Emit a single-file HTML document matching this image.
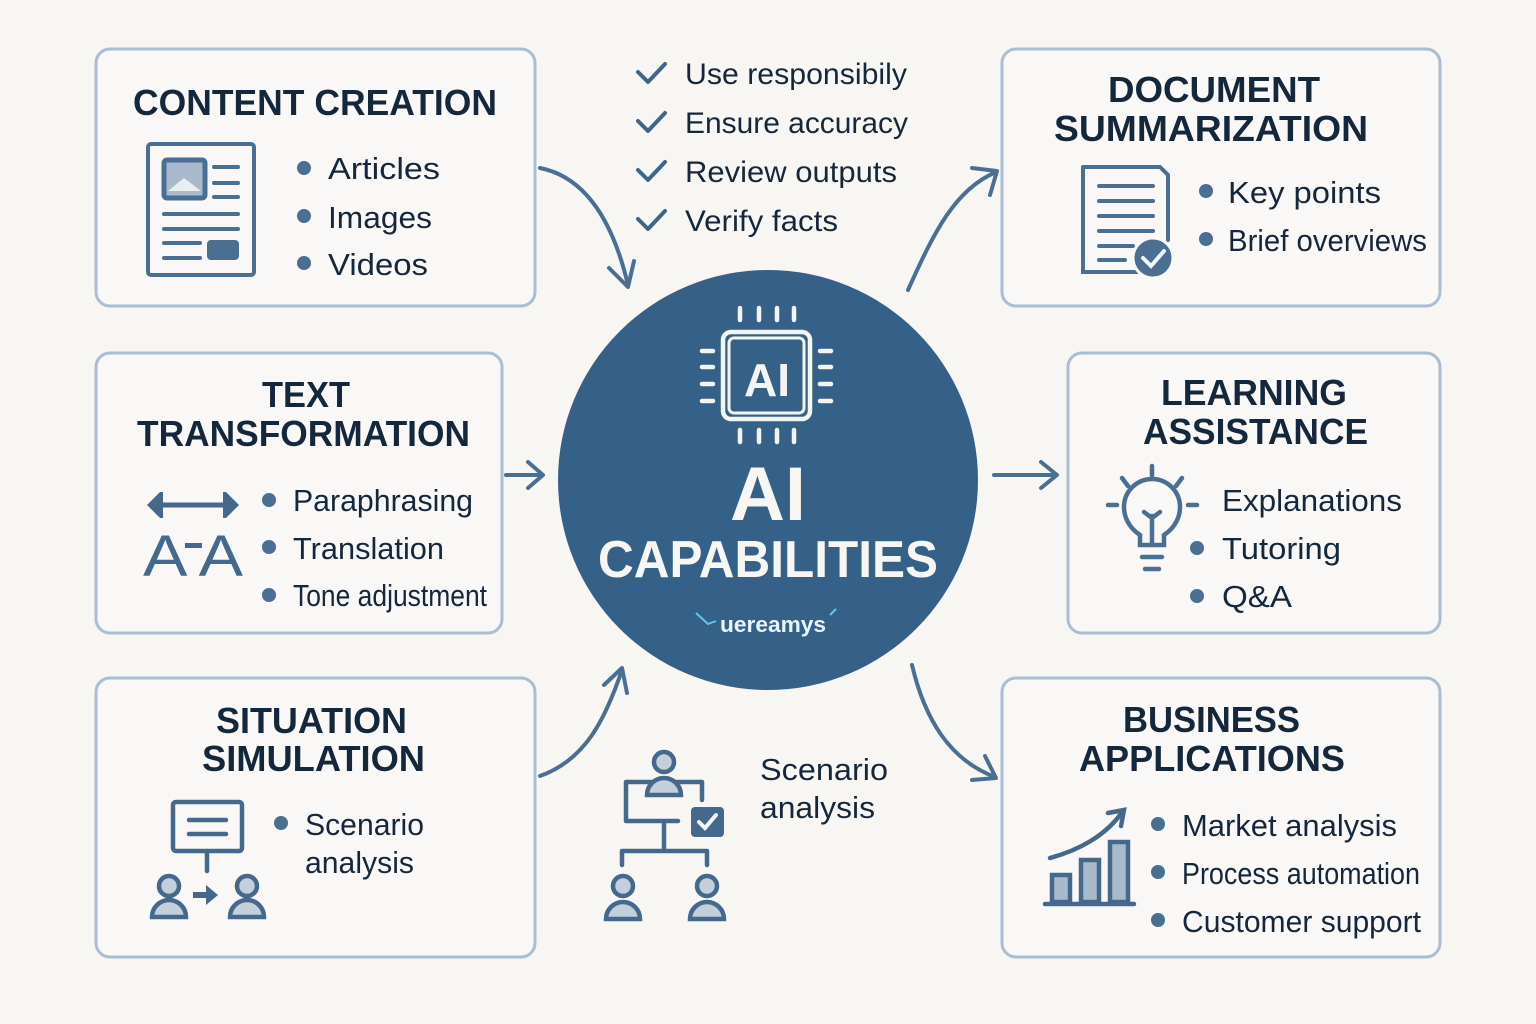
<!DOCTYPE html>
<html><head><meta charset="utf-8"><style>
html,body{margin:0;padding:0;background:#f8f6f3;}
svg{display:block}
.t{font-family:"Liberation Sans",sans-serif;font-weight:bold;fill:#15283b;}
.b{font-family:"Liberation Sans",sans-serif;fill:#15283b;}
</style></head><body>
<svg width="1536" height="1024" viewBox="0 0 1536 1024" xmlns="http://www.w3.org/2000/svg">
<rect width="1536" height="1024" fill="#f8f6f3"/>
<g fill="#f9f8f6" stroke="#a9bed3" stroke-width="3">
<rect x="96" y="49" width="439" height="257" rx="14"/>
<rect x="1002" y="49" width="438" height="257" rx="14"/>
<rect x="96" y="353" width="406" height="280" rx="14"/>
<rect x="1068" y="353" width="372" height="280" rx="14"/>
<rect x="96" y="678" width="439" height="279" rx="14"/>
<rect x="1002" y="678" width="438" height="279" rx="14"/>
</g>

<!-- arrows -->
<g fill="none" stroke="#4a6f92" stroke-width="4" stroke-linecap="round" stroke-linejoin="round">
<path d="M540 168 C590 178 615 230 628 285"/><path d="M609 268 L628 287 L634 261"/>
<path d="M908 290 C935 230 955 190 996 172"/><path d="M972 168 L997 171 L990 195"/>
<path d="M506 475 L542 475"/><path d="M528 462 L543 475 L528 488"/>
<path d="M994 475 L1056 475"/><path d="M1041 462 L1057 475 L1041 488"/>
<path d="M540 776 C585 760 605 720 622 670"/><path d="M604 685 L622 668 L627 693"/>
<path d="M912 665 C925 720 950 760 995 777"/><path d="M972 780 L996 778 L985 756"/>
</g>

<!-- center circle -->
<circle cx="768" cy="480" r="210" fill="#356189"/>
<g fill="none" stroke="#f4f4f2" stroke-width="4.5" stroke-linecap="round">
<rect x="723" y="332" width="87" height="87" rx="8"/>
<rect x="729" y="338" width="75" height="75" rx="5" stroke-width="3"/>
<path d="M740 308v12M759 308v12M777 308v12M794 308v12M740 430v12M759 430v12M777 430v12M794 430v12"/>
<path d="M702 351h11M702 367h11M702 384h11M702 401h11M820 351h11M820 367h11M820 384h11M820 401h11"/>
</g>
<text x="767" y="396" text-anchor="middle" font-family="Liberation Sans,sans-serif" font-weight="bold" font-size="46" fill="#f4f4f2">AI</text>
<text x="768" y="520" text-anchor="middle" class="t" style="fill:#f7f6f3" font-size="76">AI</text>
<text x="768" y="577" text-anchor="middle" class="t" style="fill:#f7f6f3" font-size="52" textLength="340" lengthAdjust="spacingAndGlyphs">CAPABILITIES</text>
<text x="720" y="632" class="t" style="fill:#e8f4fb" font-size="22" textLength="106" lengthAdjust="spacingAndGlyphs">uereamys</text>
<path d="M696 613 L708 624 L716 621" stroke="#62c6ea" stroke-width="2" fill="none"/>
<path d="M830 615 L836 609" stroke="#62c6ea" stroke-width="2"/>

<!-- checklist -->
<g fill="none" stroke="#3f6688" stroke-width="4" stroke-linecap="round" stroke-linejoin="round">
<path d="M638 72 L648 82 L665 64"/><path d="M638 121 L648 131 L665 113"/><path d="M638 170 L648 180 L665 162"/><path d="M638 219 L648 229 L665 211"/>
</g>
<g class="b" font-size="30">
<text x="685" y="84" class="b" textLength="222" lengthAdjust="spacingAndGlyphs">Use responsibily</text>
<text x="685" y="133" class="b" textLength="223" lengthAdjust="spacingAndGlyphs">Ensure accuracy</text>
<text x="685" y="182" class="b" textLength="212" lengthAdjust="spacingAndGlyphs">Review outputs</text>
<text x="685" y="231" class="b" textLength="153" lengthAdjust="spacingAndGlyphs">Verify facts</text>
</g>

<!-- titles -->
<g font-size="36">
<text class="t" x="133" y="115" textLength="364" lengthAdjust="spacingAndGlyphs">CONTENT CREATION</text>
<text class="t" x="1108" y="102" textLength="212" lengthAdjust="spacingAndGlyphs">DOCUMENT</text>
<text class="t" x="1054" y="141" textLength="314" lengthAdjust="spacingAndGlyphs">SUMMARIZATION</text>
<text class="t" x="262" y="407" textLength="88" lengthAdjust="spacingAndGlyphs">TEXT</text>
<text class="t" x="137" y="446" textLength="333" lengthAdjust="spacingAndGlyphs">TRANSFORMATION</text>
<text class="t" x="1161" y="405" textLength="186" lengthAdjust="spacingAndGlyphs">LEARNING</text>
<text class="t" x="1143" y="444" textLength="225" lengthAdjust="spacingAndGlyphs">ASSISTANCE</text>
<text class="t" x="216" y="733" textLength="191" lengthAdjust="spacingAndGlyphs">SITUATION</text>
<text class="t" x="202" y="771" textLength="223" lengthAdjust="spacingAndGlyphs">SIMULATION</text>
<text class="t" x="1123" y="732" textLength="177" lengthAdjust="spacingAndGlyphs">BUSINESS</text>
<text class="t" x="1079" y="771" textLength="266" lengthAdjust="spacingAndGlyphs">APPLICATIONS</text>
</g>

<!-- bullets -->
<g fill="#4a6f92">
<circle cx="304" cy="168" r="7"/><circle cx="304" cy="216" r="7"/><circle cx="304" cy="263" r="7"/>
<circle cx="1206" cy="191" r="7"/><circle cx="1206" cy="239" r="7"/>
<circle cx="269" cy="500" r="7"/><circle cx="269" cy="547" r="7"/><circle cx="269" cy="595" r="7"/>
<circle cx="1197" cy="548" r="7"/><circle cx="1197" cy="596" r="7"/>
<circle cx="281" cy="823" r="7"/>
<circle cx="1158" cy="824" r="7"/><circle cx="1158" cy="872" r="7"/><circle cx="1158" cy="920" r="7"/>
</g>
<g font-size="31">
<text class="b" x="328" y="179" textLength="112" lengthAdjust="spacingAndGlyphs">Articles</text>
<text class="b" x="328" y="228" textLength="104" lengthAdjust="spacingAndGlyphs">Images</text>
<text class="b" x="328" y="275" textLength="100" lengthAdjust="spacingAndGlyphs">Videos</text>
<text class="b" x="1228" y="203" textLength="153" lengthAdjust="spacingAndGlyphs">Key points</text>
<text class="b" x="1228" y="251" textLength="199" lengthAdjust="spacingAndGlyphs">Brief overviews</text>
<text class="b" x="293" y="511" textLength="180" lengthAdjust="spacingAndGlyphs">Paraphrasing</text>
<text class="b" x="293" y="559" textLength="151" lengthAdjust="spacingAndGlyphs">Translation</text>
<text class="b" x="293" y="606" textLength="194" lengthAdjust="spacingAndGlyphs">Tone adjustment</text>
<text class="b" x="1222" y="511" textLength="180" lengthAdjust="spacingAndGlyphs">Explanations</text>
<text class="b" x="1222" y="559" textLength="119" lengthAdjust="spacingAndGlyphs">Tutoring</text>
<text class="b" x="1222" y="607" textLength="70" lengthAdjust="spacingAndGlyphs">Q&amp;A</text>
<text class="b" x="305" y="835" textLength="119" lengthAdjust="spacingAndGlyphs">Scenario</text>
<text class="b" x="305" y="873" textLength="109" lengthAdjust="spacingAndGlyphs">analysis</text>
<text class="b" x="760" y="780" textLength="128" lengthAdjust="spacingAndGlyphs">Scenario</text>
<text class="b" x="760" y="818" textLength="115" lengthAdjust="spacingAndGlyphs">analysis</text>
<text class="b" x="1182" y="836" textLength="215" lengthAdjust="spacingAndGlyphs">Market analysis</text>
<text class="b" x="1182" y="884" textLength="238" lengthAdjust="spacingAndGlyphs">Process automation</text>
<text class="b" x="1182" y="932" textLength="239" lengthAdjust="spacingAndGlyphs">Customer support</text>
</g>

<!-- content icon -->
<g stroke="#4a6f92" stroke-linecap="round" fill="none">
<rect x="148" y="144" width="106" height="131" rx="3" stroke-width="4"/>
<rect x="164" y="160" width="41" height="38" rx="3" stroke-width="5" fill="#a8bacb"/>
<path d="M168 191 L184 178 L201 191" stroke-width="0" fill="#e9eef2"/>
<path d="M214 167h24M214 183h24M214 197h24M164 214h74M164 229h74M164 243h36M164 258h36" stroke-width="4"/>
<rect x="207" y="240" width="32" height="20" rx="4" fill="#4a6f92" stroke-width="0"/>
</g>

<!-- document icon -->
<g stroke="#4a6f92" stroke-width="4" stroke-linecap="round" fill="none">
<path d="M1083 167 H1160 L1168 175 V240 M1140 272 H1083 V167"/>
<path d="M1099 186h54M1099 201h54M1099 216h54M1099 231h54M1099 246h34M1099 260h26"/>
<circle cx="1153" cy="258" r="20" fill="#4a6f92" stroke="#f9f8f6" stroke-width="3"/>
<path d="M1143 258 L1151 266 L1164 251" stroke="#f5f5f3" stroke-width="4"/>
</g>

<!-- text transform icon -->
<g fill="#44698c">
<path d="M162 505 H226" stroke="#44698c" stroke-width="5"/>
<path d="M147 505 L160 492 L163 492 L163 518 L160 518 Z"/>
<path d="M239 505 L226 492 L223 492 L223 518 L226 518 Z"/>
<text x="143" y="576" font-family="Liberation Sans,sans-serif" font-size="58" textLength="100" lengthAdjust="spacingAndGlyphs">A A</text>
<rect x="185" y="543" width="17" height="5"/>
</g>

<!-- bulb -->
<g stroke="#4a6f92" stroke-width="4.5" stroke-linecap="round" fill="none">
<path d="M1152 466v10M1122 478l6 8M1182 478l-6 8M1108 505h9M1188 505h9"/>
<path d="M1140 545 V535 C1128 527 1124 516 1124 507 A28 28 0 0 1 1180 507 C1180 516 1176 527 1164 535 V545 Z"/>
<path d="M1152 545 V516 M1144 512 L1152 518 L1160 512"/>
<path d="M1142 557h20M1145 569h14"/>
</g>

<!-- situation icon -->
<g stroke="#44698c" stroke-width="4.5" stroke-linecap="round" fill="none">
<rect x="173" y="802" width="69" height="49" rx="3"/>
<path d="M189 820h37M189 834h37M207 851v20"/>
</g>
<path d="M193 892 h13 v-7 l12 10 l-12 10 v-7 h-13z" fill="#44698c"/>
<g stroke="#44698c" stroke-width="4.5" fill="#c3cfda">
<circle cx="169" cy="886" r="10"/><path d="M152 917 a17 17 0 0 1 34 0 z"/>
<circle cx="247" cy="886" r="10"/><path d="M230 917 a17 17 0 0 1 34 0 z"/>
</g>

<!-- org chart icon -->
<g stroke="#44698c" stroke-width="4.5" stroke-linecap="round" stroke-linejoin="round" fill="none">
<path d="M678 821 H626 V782 H702 V800 M664 821 V849 M622 865 V851 H707 V865"/>
</g>
<g stroke="#44698c" stroke-width="4.5" fill="#c3cfda">
<circle cx="664" cy="762" r="10"/><path d="M647 795 a17 17 0 0 1 34 0 z"/>
<circle cx="623" cy="886" r="10"/><path d="M606 919 a17 17 0 0 1 34 0 z"/>
<circle cx="707" cy="886" r="10"/><path d="M690 919 a17 17 0 0 1 34 0 z"/>
</g>
<rect x="691" y="807" width="33" height="30" rx="4" fill="#44698c"/>
<path d="M699 822 L705 828 L716 815" stroke="#f5f5f3" stroke-width="4" fill="none" stroke-linecap="round"/>

<!-- chart icon -->
<g stroke="#44698c" stroke-width="4.5" stroke-linecap="round">
<path d="M1050 858 C1080 850 1105 835 1120 815" fill="none"/>
<path d="M1108 813 L1124 810 L1121 826" fill="none"/>
<rect x="1052" y="875" width="18" height="27" fill="#a8bacb"/>
<rect x="1081" y="860" width="18" height="42" fill="#a8bacb"/>
<rect x="1110" y="842" width="18" height="60" fill="#a8bacb"/>
<path d="M1045 904 H1134"/>
</g>
</svg>
</body></html>
